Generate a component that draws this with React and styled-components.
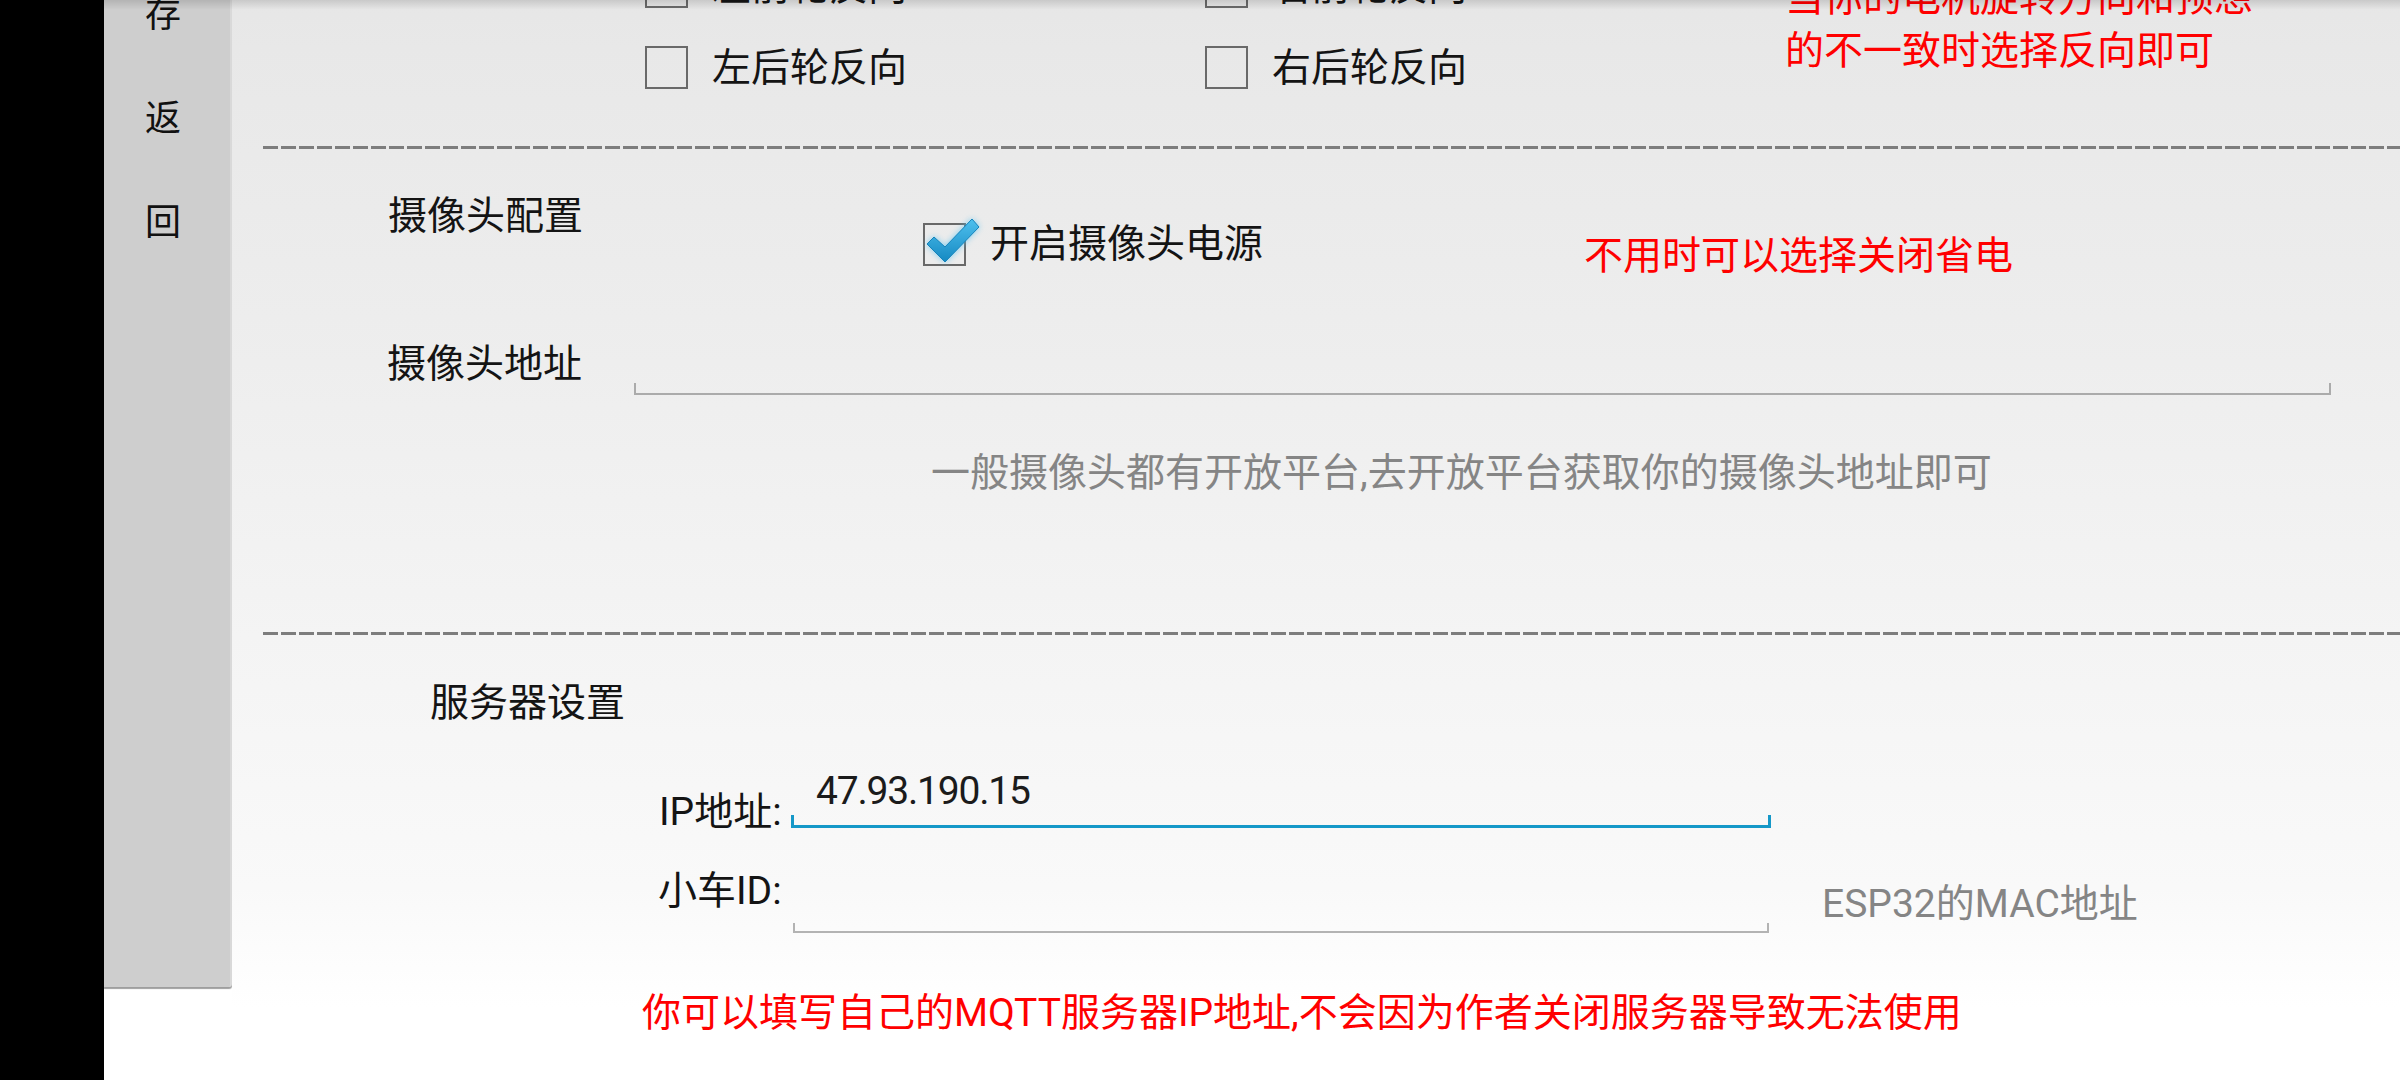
import React from 'react'
import styled, { createGlobalStyle } from 'styled-components'

const red = `#ff0000`
const ink = `#141414`
const hint = `#858585`
const holo = `#1598c8`
const textSize = `39px`

const Global = createGlobalStyle`
  html, body {
    margin: 0;
    padding: 0;
    background: #fff;
    overflow: hidden;
  }
  body {
    font-family: Roboto, 'Noto Sans CJK SC', sans-serif;
    color: ${ink};
  }
`

const Screen = styled.div`
  position: relative;
  display: flex;
  width: 2400px;
  height: 1080px;
  overflow: hidden;
  background: #fff;

  &::after {
    content: '';
    position: absolute;
    left: 104px;
    right: 0;
    top: 0;
    height: 10px;
    background: linear-gradient(rgba(0, 0, 0, 0.13), rgba(0, 0, 0, 0));
    pointer-events: none;
  }
`

const NavStrip = styled.div`
  width: 104px;
  flex-shrink: 0;
  background: #000;
`

/* scrolled page: sidebar + settings */
const Scroller = styled.div`
  flex: 1;
  display: flex;
  align-items: flex-start;
  margin-top: -143px;
`

const Sidebar = styled.div`
  width: 128px;
  height: 1130px;
  flex-shrink: 0;
  box-sizing: border-box;
  padding: 2px 8px 0 0;
  background: #cecece;
  border-right: 2px solid #d9d9d9;
  border-bottom-right-radius: 3px;
  box-shadow: 0 2px 1px rgba(0, 0, 0, 0.38);
  display: flex;
  flex-direction: column;
  align-items: center;
`

const SideButton = styled.div`
  display: flex;
  flex-direction: column;
  align-items: center;
`

const SideLetter = styled.span`
  font-size: 36px;
  line-height: 104px;
  color: #111;
`

const Settings = styled.div`
  flex: 1;
  height: 1223px;
  display: flex;
  flex-direction: column;
  background: linear-gradient(
    180deg,
    #e2e2e2 0px,
    #e8e8e8 190px,
    #ededed 460px,
    #f4f4f4 780px,
    #f9f9f9 1030px,
    #ffffff 1150px
  );
`

const MotorGrid = styled.div`
  display: grid;
  grid-template-columns: 560px 580px auto;
  grid-auto-rows: 81px;
  padding: 89px 0 0 413px;
`

const CheckItem = styled.label`
  display: flex;
  align-items: center;
  gap: 24px;
  font-size: ${textSize};
  line-height: 50px;
  white-space: nowrap;
`

const Box = styled.span`
  position: relative;
  width: 43px;
  height: 43px;
  box-sizing: border-box;
  border: 2px solid #696969;
  flex-shrink: 0;
`

const Tick = styled.svg`
  position: absolute;
  left: -4px;
  top: -10px;
  overflow: visible;
  filter: drop-shadow(0 0 3px rgba(90, 195, 240, 0.75));
`

const Note = styled.div`
  color: ${red};
  font-size: ${textSize};
  line-height: ${p => p.$lh || 50}px;
  white-space: nowrap;
  padding-top: ${p => p.$pad || 0}px;
`

const MotorNote = styled(Note)`
  grid-column: 3;
  grid-row: 1 / span 2;
`

const Divider = styled.div`
  margin: ${p => p.$gap}px 0 0 31px;
  height: 3px;
  background: repeating-linear-gradient(90deg, #7d7d7d 0 15px, transparent 15px 18px);
`

const Row = styled.div`
  display: flex;
  align-items: flex-start;
  height: ${p => p.$h}px;
  padding-left: ${p => p.$left}px;
  flex-shrink: 0;
`

const Cell = styled.div`
  width: ${p => (p.$w ? `${p.$w}px` : 'auto')};
  margin-top: ${p => p.$top || 0}px;
  margin-left: ${p => p.$ml || 0}px;
  flex-shrink: 0;
`

const Label = styled.div`
  font-size: ${textSize};
  line-height: 50px;
  white-space: nowrap;
`

const Hint = styled(Label)`
  color: ${hint};
`

const FieldText = styled.div`
  font-size: ${textSize};
  line-height: 50px;
  letter-spacing: -1.2px;
  padding-left: 25px;
  color: #1b1b1b;
`

const Underline = styled.div`
  box-sizing: border-box;
  height: ${p => p.$h}px;
  margin-top: ${p => p.$top || 0}px;
  border: ${p => p.$t}px solid ${p => p.$c};
  border-top: none;
`

function Check({ checked, children }) {
  return (
    <CheckItem>
      <Box>
        {checked && (
          <Tick width="64" height="52" viewBox="0 0 64 52">
            <defs>
              <linearGradient id="tickFill" x1="0" y1="0" x2="0" y2="1">
                <stop offset="0" stopColor="#4fc0ee" />
                <stop offset="1" stopColor="#1589c2" />
              </linearGradient>
            </defs>
            <path
              d="M6 29 L13 22 L24 32 L51 4 L58 12 L24 47 Z"
              fill="url(#tickFill)"
              stroke="#1483bb"
              strokeWidth="1"
              strokeLinejoin="round"
            />
          </Tick>
        )}
      </Box>
      <span>{children}</span>
    </CheckItem>
  )
}

export default function App() {
  return (
    <Screen>
      <Global />
      <NavStrip />
      <Scroller>
        <Sidebar>
          <SideButton>
            <SideLetter>保</SideLetter>
            <SideLetter>存</SideLetter>
          </SideButton>
          <SideButton>
            <SideLetter>返</SideLetter>
            <SideLetter>回</SideLetter>
          </SideButton>
        </Sidebar>

        <Settings>
          <MotorGrid>
            <Check>左前轮反向</Check>
            <Check>右前轮反向</Check>
            <MotorNote $lh={53} $pad={26}>
              当你的电机旋转方向和预想
              <br />
              的不一致时选择反向即可
            </MotorNote>
            <Check>左后轮反向</Check>
            <Check>右后轮反向</Check>
          </MotorGrid>

          <Divider $gap={38} />

          <Row $h={187} $left={156}>
            <Cell $w={535} $top={42}>
              <Label>摄像头配置</Label>
            </Cell>
            <Cell $w={661} $top={70}>
              <Check checked>开启摄像头电源</Check>
            </Cell>
            <Cell $top={82}>
              <Note>不用时可以选择关闭省电</Note>
            </Cell>
          </Row>

          <Row $h={109} $left={155}>
            <Cell $w={247} $top={3}>
              <Label>摄像头地址</Label>
            </Cell>
            <Cell $w={1697}>
              <Underline $h={12} $top={47} $t={2} $c="#ababab" />
            </Cell>
          </Row>

          <Row $h={187} $left={699}>
            <Cell $top={3}>
              <Hint>一般摄像头都有开放平台,去开放平台获取你的摄像头地址即可</Hint>
            </Cell>
          </Row>

          <Divider $gap={0} />

          <Row $h={127} $left={198}>
            <Cell $top={43}>
              <Label>服务器设置</Label>
            </Cell>
          </Row>

          <Row $h={101} $left={427}>
            <Cell $w={132} $top={25}>
              <Label>IP地址:</Label>
            </Cell>
            <Cell $w={980} $top={4}>
              <FieldText>47.93.190.15</FieldText>
              <Underline $h={13} $top={-1} $t={3} $c={holo} />
            </Cell>
          </Row>

          <Row $h={122} $left={426}>
            <Cell $w={135} $top={3}>
              <Label>小车ID:</Label>
            </Cell>
            <Cell $w={976}>
              <Underline $h={10} $top={60} $t={2} $c="#b3b3b3" />
            </Cell>
            <Cell $ml={53} $top={16}>
              <Hint>ESP32的MAC地址</Hint>
            </Cell>
          </Row>

          <Row $h={80} $left={410}>
            <Cell $top={3}>
              <Note>你可以填写自己的MQTT服务器IP地址,不会因为作者关闭服务器导致无法使用</Note>
            </Cell>
          </Row>
        </Settings>
      </Scroller>
    </Screen>
  )
}
